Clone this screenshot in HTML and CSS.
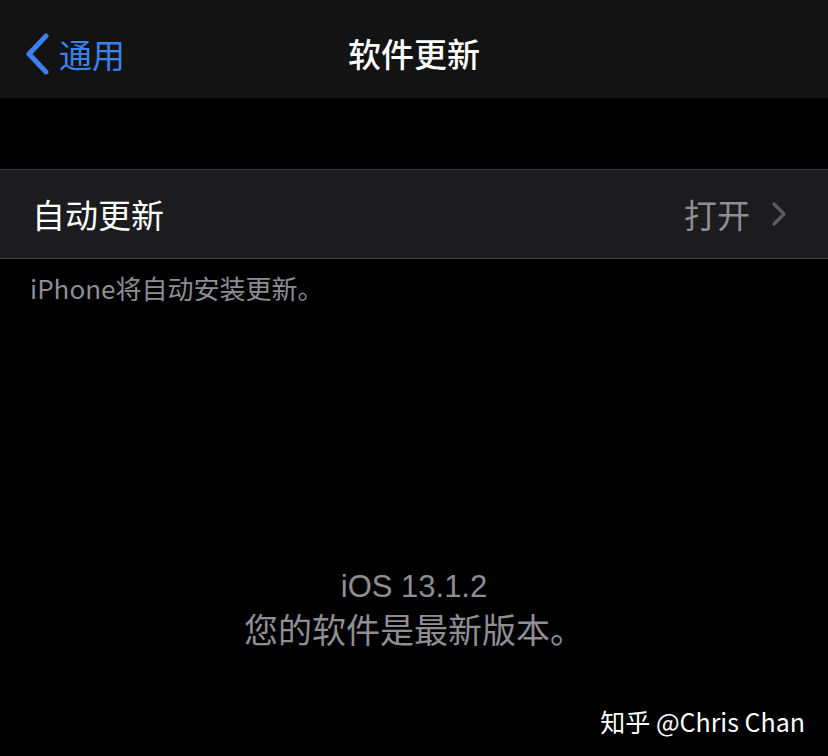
FILE: index.html
```html
<!DOCTYPE html>
<html lang="zh-CN">
<head>
<meta charset="utf-8">
<title>软件更新</title>
<link rel="stylesheet" href="styles.css">
</head>
<body>
<div class="screen">
  <header class="navbar">
    <div class="nav-left">
      <svg class="back-chevron" width="26" height="42" viewBox="0 0 26 42"><path d="M22 3 L5 21 L22 39" fill="none" stroke="#3b82f0" stroke-width="5" stroke-linecap="round" stroke-linejoin="round"/></svg>
      <span class="back-label">通用</span>
    </div>
    <div class="nav-title">软件更新</div>
    <div class="nav-right"></div>
  </header>

  <section class="group">
    <div class="cell">
      <span class="cell-label">自动更新</span>
      <span class="cell-value">打开</span>
      <svg class="cell-chevron" width="18" height="26" viewBox="0 0 18 26"><path d="M4 3 L14 13 L4 23" fill="none" stroke="#5b5b5f" stroke-width="3.2" stroke-linecap="round" stroke-linejoin="round"/></svg>
    </div>
  </section>
  <p class="group-footer">iPhone将自动安装更新。</p>

  <div class="status">
    <div class="status-version">iOS 13.1.2</div>
    <div class="status-text">您的软件是最新版本。</div>
  </div>

  <div class="watermark">知乎 @Chris Chan</div>
</div>
</body>
</html>
```

FILE: styles.css
```css
html, body {
  margin: 0;
  padding: 0;
  background: #000;
}
body {
  font-family: "Noto Sans CJK SC", "Noto Sans", sans-serif;
}
.screen {
  position: relative;
  width: 828px;
  height: 756px;
  overflow: hidden;
  background: #000;
}
.navbar {
  height: 98px;
  box-sizing: border-box;
  padding-top: 10px;
  background: #131313;
  display: grid;
  grid-template-columns: 1fr auto 1fr;
  align-items: center;
}
.nav-left {
  display: flex;
  align-items: center;
  padding-left: 24px;
  gap: 9px;
  color: #3b82f0;
}
.back-chevron {
  display: block;
}
.back-label {
  font-size: 33px;
  line-height: 1;
  color: #3b82f0;
  letter-spacing: 0;
}
.nav-title {
  font-size: 33px;
  line-height: 1;
  color: #fff;
  font-weight: 500;
  margin-top: -2px;
}
.group {
  margin-top: 71px;
  background: #1c1c1e;
  border-top: 1px solid #38383a;
  border-bottom: 1px solid #3d3d40;
}
.cell {
  height: 88px;
  display: flex;
  align-items: center;
  padding-left: 32px;
  padding-right: 40px;
}
.cell-label {
  font-size: 33px;
  color: #fff;
  line-height: 1;
  flex: 1;
}
.cell-value {
  font-size: 33px;
  line-height: 1;
  color: #8e8e93;
  margin-right: 20px;
}
.cell-chevron {
  display: block;
}
.group-footer {
  margin: 11px 0 0 30px;
  font-size: 26px;
  line-height: 36px;
  color: #8d8d92;
}
.status {
  margin-top: 262px;
  text-align: center;
  color: #8e8e93;
}
.status-version {
  font-family: "Liberation Sans", Arial, sans-serif;
  font-size: 31px;
  line-height: 38px;
}
.status-text {
  font-size: 34px;
  line-height: 46px;
}
.watermark {
  position: absolute;
  right: 23px;
  bottom: 22px;
  font-size: 25px;
  line-height: 1;
  color: #fff;
  font-family: "Noto Sans CJK SC", "Noto Sans", sans-serif;
}
```
